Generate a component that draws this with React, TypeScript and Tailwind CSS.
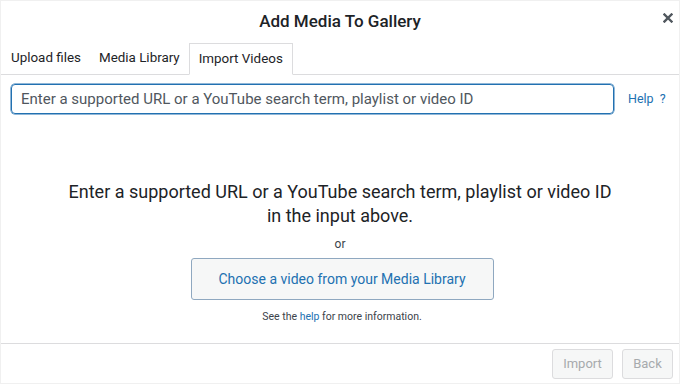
import React from "react";

export default function App() {
  return (
    <div
      className="w-[680px] h-[384px] bg-white border border-[#f0f0f0] flex flex-col text-[#1d2327] overflow-hidden"
      style={{ fontFamily: "Roboto, 'Liberation Sans', sans-serif" }}
    >
      <div className="relative h-[42px] flex items-center justify-center">
        <h1 className="text-[17px] font-medium">Add Media To Gallery</h1>
        <button className="absolute right-[3px] top-[9px] w-[16px] h-[16px] flex items-center justify-center text-[#50575e]">
          <svg width="10" height="10" viewBox="0 0 10 10">
            <path d="M1.5 1.5 L8.5 8.5 M8.5 1.5 L1.5 8.5" stroke="currentColor" strokeWidth="2.4" strokeLinecap="square" />
          </svg>
        </button>
      </div>
      <div className="flex items-end h-[32px] border-b border-[#dcdcde] pl-[1px]">
        <div className="px-[9px] h-[31px] flex items-center text-[13.4px]">Upload files</div>
        <div className="px-[9px] h-[31px] flex items-center text-[13.4px]">Media Library</div>
        <div className="px-[9px] h-[32px] mb-[-1px] flex items-center text-[13.4px] bg-white border border-[#dcdcde] border-b-white">
          Import Videos
        </div>
      </div>
      <div className="flex items-center mt-[9px] pl-[10px]">
        <div className="w-[603px] h-[30px] border border-[#2271b1] rounded-[4px] flex items-center px-[9px] text-[15px] text-[#50575e] shadow-[0_0_0_0.5px_#2271b1]">
          Enter a supported URL or a YouTube search term, playlist or video ID
        </div>
        <a className="ml-[14px] text-[12.5px] text-[#2271b1]">Help&nbsp;&nbsp;?</a>
      </div>
      <div className="flex flex-col items-center mt-[66px]">
        <p className="text-[18px] leading-[24px] text-center text-[#1d2327]">
          Enter a supported URL or a YouTube search term, playlist or video ID
          <br />
          in the input above.
        </p>
        <p className="text-[12px] mt-[7px] text-[#3c434a]">or</p>
        <button className="mt-[5px] ml-[4px] w-[303px] h-[42px] bg-[#f6f7f7] border border-[#8fa8c0] rounded-[3px] text-[14px] text-[#2271b1]">
          Choose a video from your Media Library
        </button>
        <p className="text-[10.5px] mt-[9px] ml-[4px] text-[#3c434a]">
          See the <span className="text-[#2271b1]">help</span> for more information.
        </p>
      </div>
      <div className="mt-auto border-t border-[#dcdcde] h-[40px] flex items-center justify-end pr-[6px] gap-[9px]">
        <button className="w-[61px] h-[30px] border border-[#dcdcde] rounded-[3px] bg-[#f6f7f7] text-[13px] text-[#a7aaad]">Import</button>
        <button className="w-[51px] h-[30px] border border-[#dcdcde] rounded-[3px] bg-[#f6f7f7] text-[13px] text-[#a7aaad]">Back</button>
      </div>
    </div>
  );
}
